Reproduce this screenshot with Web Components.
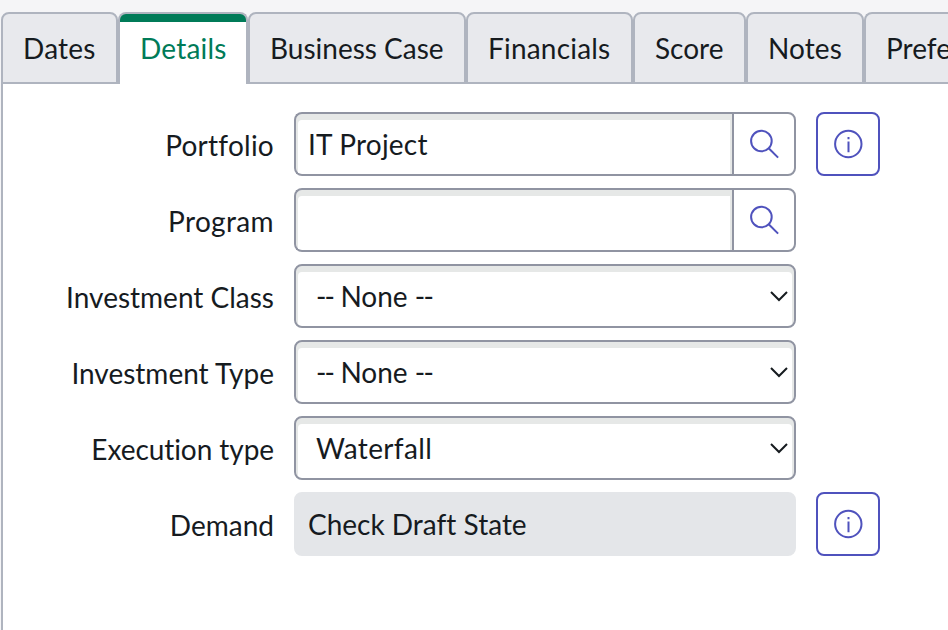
<!DOCTYPE html>
<html lang="en">
<head>
<meta charset="utf-8">
<title>Demand</title>
<style>
  html, body {
    margin: 0;
    height: 100%;
    overflow: hidden;
  }

  body {
    background: #f5f5f7;
    color: #161b1f;
    font: 28px/36px Lato, "Liberation Sans", sans-serif;
    font-variant-ligatures: none;
  }
</style>
</head>
<body>
<demand-record></demand-record>

<script>
class TabItem extends HTMLElement {
  constructor() {
    super();
    this.attachShadow({ mode: "open" });
  }

  static get styles() {
    return /* css */`
      :host {
        display: flex;
        flex: none;
        box-sizing: border-box;
        width: var(--width);
        height: 72px;
        align-items: center;
        padding-left: 20px;
        background: #e8e9ed;
        border: 2px solid #afb4bf;
        border-radius: 8px 8px 0 0;
        letter-spacing: var(--track, 0);
        white-space: nowrap;
      }

      :host([active]) {
        background: linear-gradient(#007b58 8px, #fff 8px);
        color: #007b58;
        border-bottom: 0;
        padding-bottom: 2px;
      }

      :host([last]) {
        flex: 1;
        min-width: 0;
        border-right: 0;
        border-top-right-radius: 0;
      }
    `;
  }

  connectedCallback() {
    this.shadowRoot.innerHTML = /* html */`
    <style>${TabItem.styles}</style>
    <span><slot></slot></span>`;
  }
}

class UiIcon extends HTMLElement {
  constructor() {
    super();
    this.attachShadow({ mode: "open" });
  }

  static get shapes() {
    return {
      search: `<circle cx="13.4" cy="13" r="10.3"/><path d="M20.7 20.3l9.4 9.3"/>`,
      info: `<circle cx="16.3" cy="16" r="13.2"/><path d="M16.5 13.5v10.8M16.5 9v2.2"/>`,
      chevron: `<path d="M9 12l8 8 8-8"/>`
    };
  }

  static get styles() {
    return /* css */`
      :host {
        display: block;
        flex: none;
        width: 32px;
        height: 32px;
      }

      svg {
        display: block;
        fill: none;
        stroke: currentColor;
        stroke-width: 2;
      }
    `;
  }

  connectedCallback() {
    this.shadowRoot.innerHTML = /* html */`
    <style>${UiIcon.styles}</style>
    <svg width="32" height="32" viewBox="0 0 32 32">${UiIcon.shapes[this.getAttribute("name")]}</svg>`;
  }
}

class FormField extends HTMLElement {
  constructor() {
    super();
    this.attachShadow({ mode: "open" });
  }

  static get styles() {
    return /* css */`
      :host {
        --line: #9094a2;
        --accent: #4f52bd;

        display: flex;
        height: 64px;
      }

      .label {
        width: 271px;
        margin-right: 20px;
        padding-top: 15px;
        box-sizing: border-box;
        text-align: right;
        letter-spacing: var(--label-track, 0);
        white-space: nowrap;
      }

      .control {
        display: flex;
        width: 502px;
      }

      .value {
        flex: 1;
        display: flex;
        justify-content: space-between;
        align-items: center;
        box-sizing: border-box;
        padding: 0 0 0 12px;
        background: #fff;
        border: 2px solid var(--line);
        border-radius: 8px;
        box-shadow: inset 0 4px 0 2px #e6e8e7;
        letter-spacing: var(--value-track, 0);
      }

      .value.lookup {
        border-right: 0;
        border-radius: 8px 0 0 8px;
      }

      .value.select {
        padding-left: 20px;
      }

      .value.readonly {
        background: #e4e6e9;
        border-color: #e4e6e9;
        box-shadow: none;
      }

      /* tightens the dashes of an empty choice */
      ::slotted(i) {
        font-style: normal;
        letter-spacing: -1.8px;
      }

      .button {
        display: flex;
        justify-content: center;
        align-items: center;
        box-sizing: border-box;
        width: 64px;
        height: 64px;
        background: #fff;
        color: var(--accent);
        border: 2px solid var(--line);
        border-radius: 0 8px 8px 0;
      }

      .button.info {
        margin-left: 20px;
        border-color: var(--accent);
        border-radius: 8px;
      }
    `;
  }

  connectedCallback() {
    const type = this.getAttribute("type");
    const search = `<div class="button"><ui-icon name="search"></ui-icon></div>`;
    const info = `<div class="button info"><ui-icon name="info"></ui-icon></div>`;
    const chevron = `<ui-icon name="chevron"></ui-icon>`;

    this.shadowRoot.innerHTML = /* html */`
    <style>${FormField.styles}</style>
    <div class="label">${this.getAttribute("label")}</div>
    <div class="control">
      <div class="value ${type}">
        <span><slot></slot></span>
        ${type === "select" ? chevron : ""}
      </div>
      ${type === "lookup" ? search : ""}
    </div>
    ${this.hasAttribute("info") ? info : ""}`;
  }
}

class DemandRecord extends HTMLElement {
  constructor() {
    super();
    this.attachShadow({ mode: "open" });
  }

  static get styles() {
    return /* css */`
      :host {
        display: flex;
        flex-direction: column;
        height: 100%;
        box-sizing: border-box;
        padding: 12px 0 0 1px;
      }

      .tabs {
        display: flex;
        height: 72px;
      }

      .panel {
        flex: 1;
        display: flex;
        flex-direction: column;
        gap: 12px;
        padding-top: 28px;
        background: #fff;
        border-left: 2px solid #afb4bf;
      }
    `;
  }

  connectedCallback() {
    this.shadowRoot.innerHTML = /* html */`
    <style>${DemandRecord.styles}</style>
    <div class="tabs">
      <tab-item style="--width: 117px; --track: .2px">Dates</tab-item>
      <tab-item style="--width: 130px; --track: .2px" active>Details</tab-item>
      <tab-item style="--width: 218px">Business Case</tab-item>
      <tab-item style="--width: 167px; --track: .2px">Financials</tab-item>
      <tab-item style="--width: 113px">Score</tab-item>
      <tab-item style="--width: 118px; --track: .1px">Notes</tab-item>
      <tab-item style="--width: 83px" last>Prefe</tab-item>
    </div>
    <div class="panel">
      <form-field label="Portfolio" type="lookup" style="--label-track: .25px; --value-track: .2px" info>IT Project</form-field>
      <form-field label="Program" type="lookup" style="--label-track: .35px"></form-field>
      <form-field label="Investment Class" type="select"><i>--</i> None <i>--</i></form-field>
      <form-field label="Investment Type" type="select"><i>--</i> None <i>--</i></form-field>
      <form-field label="Execution type" type="select" style="--label-track: -.07px; --value-track: .35px">Waterfall</form-field>
      <form-field label="Demand" type="readonly" info>Check Draft State</form-field>
    </div>`;
  }
}

customElements.define("ui-icon", UiIcon);
customElements.define("tab-item", TabItem);
customElements.define("form-field", FormField);
customElements.define("demand-record", DemandRecord);
</script>
</body>
</html>
